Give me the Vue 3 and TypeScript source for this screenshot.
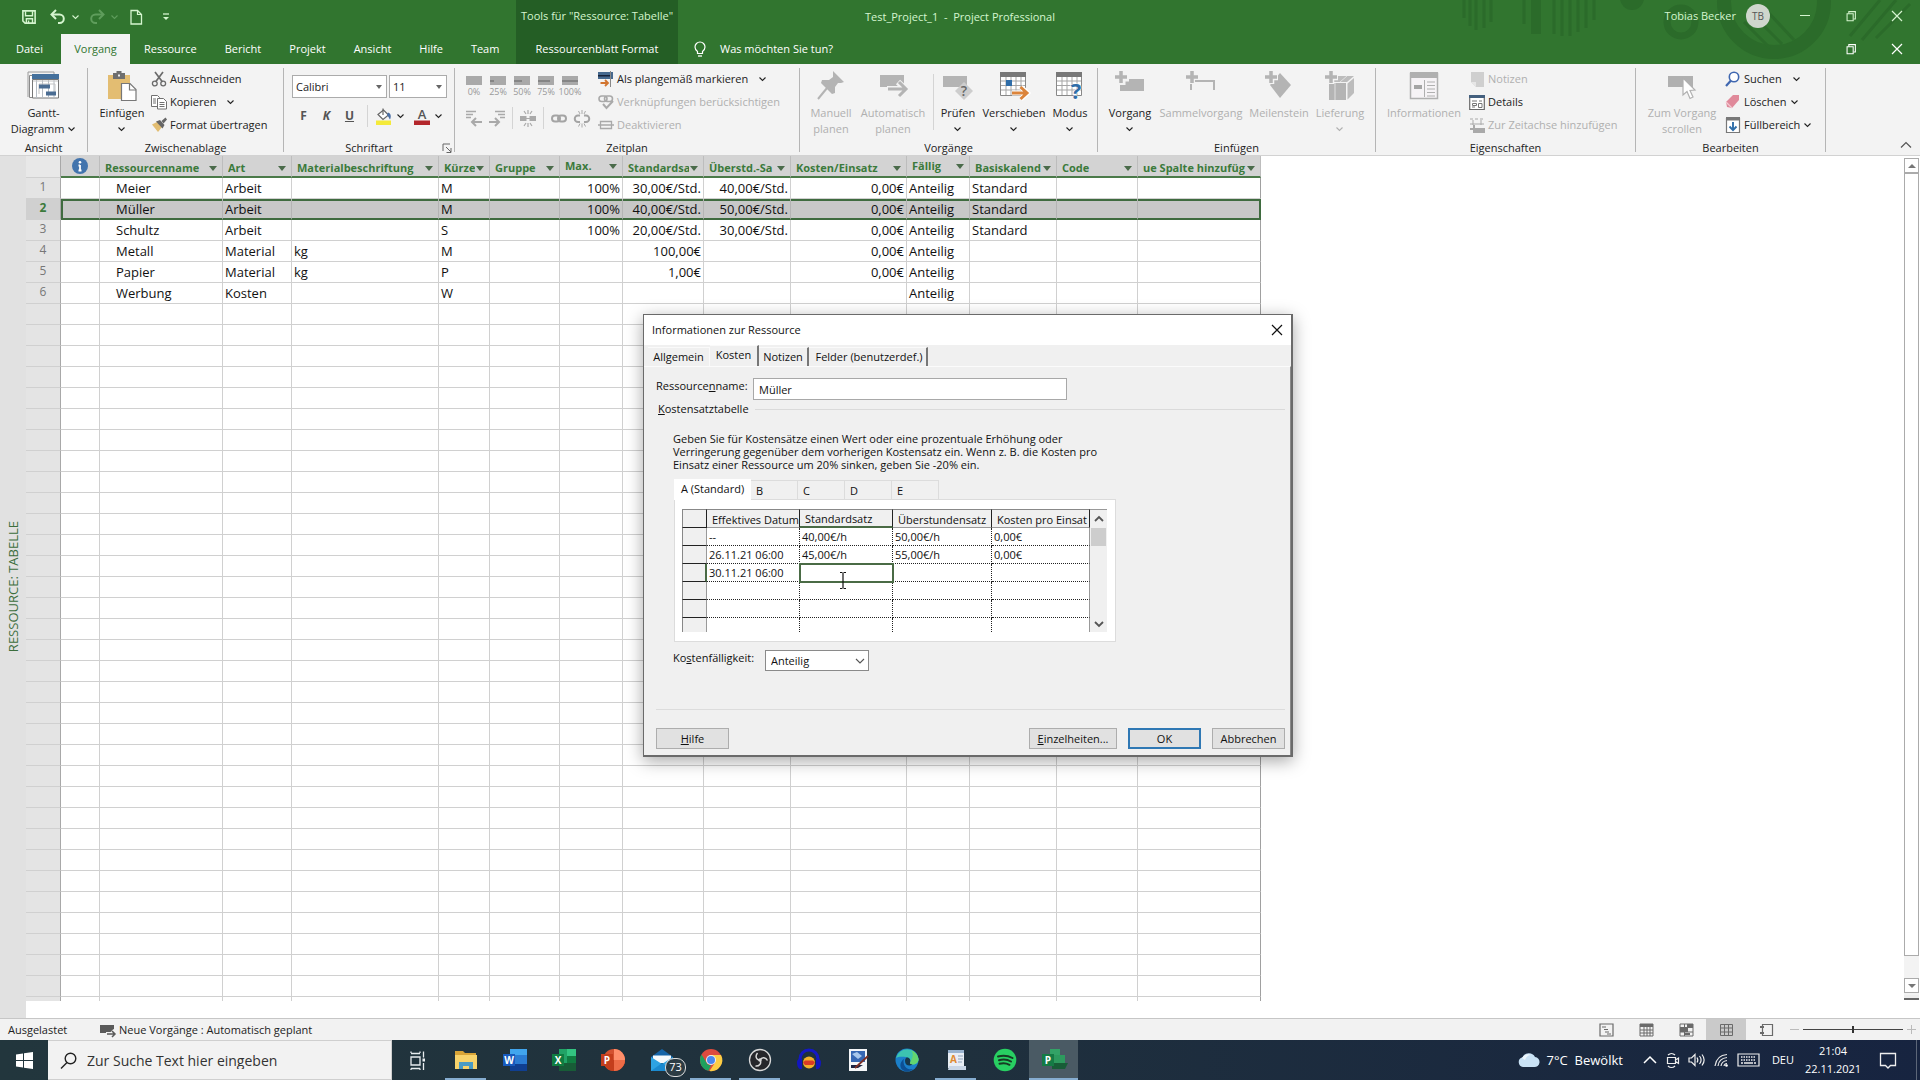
<script setup lang="ts">
import { ref } from 'vue'

type Align = 'left' | 'right'

interface Column {
  key: string
  title: string
  width: number
  align: Align
  raised?: boolean
}

interface TaskApp {
  id: string
  label: string
  running?: boolean
  active?: boolean
  badge?: string
}

const chevron = '<path d="M1.500 2.500 4.500 5.500 7.500 2.500" fill="none" stroke="currentColor" stroke-width="1.100"/>'

const icons: Record<string, string> = {
  save: '<path d="M1 1h14v14H3.500L1 12.500z" fill="none" stroke="currentColor" stroke-width="1.800"/><path d="M4 1.500v5h8v-5M5 15v-5h7v5M7.500 12v3" fill="none" stroke="currentColor" stroke-width="1.600"/>',
  undo: '<path d="M2 5.500h7.500a4.300 4.300 0 0 1 0 8.600H8" fill="none" stroke="currentColor" stroke-width="2"/><path d="M6 1 1.500 5.500 6 10" fill="none" stroke="currentColor" stroke-width="2"/>',
  redo: '<path d="M14 5.500H6.500a4.300 4.300 0 0 0 0 8.600H8" fill="none" stroke="currentColor" stroke-width="2"/><path d="M10 1l4.500 4.500L10 10" fill="none" stroke="currentColor" stroke-width="2"/>',
  page: '<path d="M3 1.500h6.500L13.500 5.500v9.500H3z" fill="none" stroke="currentColor" stroke-width="1.300"/><path d="M9.500 1.500v4h4" fill="none" stroke="currentColor" stroke-width="1.200"/>',
  customize: '<path d="M5 5h6" stroke="currentColor" stroke-width="1.300"/><path d="M5 8h6l-3 3z" fill="currentColor"/>',
  bulb: '<path d="M5.500 12.500v-2C4 9.300 3 8 3 6a5 5 0 0 1 10 0c0 2-1 3.300-2.500 4.500v2z" fill="none" stroke="currentColor" stroke-width="1.200"/><path d="M6 15h4" stroke="currentColor" stroke-width="1.300"/>',
  minimize: '<path d="M3 7.500h10" stroke="currentColor"/>',
  restore: '<path d="M3.500 5.500h7v8h-7z" fill="none" stroke="currentColor" stroke-width="1.200"/><path d="M5.500 5V3h7.500v8.500h-2" fill="none" stroke="currentColor" stroke-width="1.200"/>',
  close: '<path d="M3 3l10 10M13 3 3 13" stroke="currentColor" stroke-width="1.200"/>',
  chevron,
  gantt: '<path d="M1.500 4.500h27v22h-27z" fill="#fff" stroke="#8a8a8a"/><path d="M0 1h26v6M0 1v25" fill="none" stroke="#9a9a9a"/><path d="M4 3h27v5H4z" fill="#44709c"/><path d="M4.500 8.500h26v18.500h-26z" fill="#fff" stroke="#777"/><path d="M8.500 9v18M14.500 9v18M20.500 9v18M26 9v18" stroke="#b5bcc4"/><path d="M5 10h25M11 23V13h16v8" stroke="#c4c4c4" fill="none"/><path d="M11 13.500h11v4H11zM18 20.500h10v4H18z" fill="#4a6c92"/>',
  paste: '<path d="M1 4h22v24H1z" fill="#e3bd72"/><path d="M6 2h12v6H6z" fill="#6e6e6e"/><path d="M9.500 0h5v4h-5z" fill="#6e6e6e"/><path d="M11 3.500h2v2h-2z" fill="#eee"/><path d="M14.500 12.500h8.500L29 18.500V29.500H14.500z" fill="#fff" stroke="#777" stroke-width="1.200"/><path d="M22.500 12.500v6.500h6.500" fill="none" stroke="#777" stroke-width="1.200"/>',
  cut: '<path d="M4 1l7.500 10M12 1 4.500 11" stroke="#6b6b6b" stroke-width="1.700"/><circle cx="3.800" cy="12.500" r="2.400" fill="none" stroke="#6b6b6b" stroke-width="1.300"/><circle cx="12.200" cy="12.500" r="2.400" fill="none" stroke="#6b6b6b" stroke-width="1.300"/>',
  copy: '<path d="M.500 1.500h6l2 2v9h-8z" fill="#fff" stroke="#707070"/><path d="M6.500 4.500h6l3 3v7.500h-9z" fill="#fff" stroke="#707070"/><path d="M2 5h3M2 7h3M2 9h3M8.500 8.500h5M8.500 10.500h5M8.500 12.500h5" stroke="#707070"/>',
  brush: '<path d="M1 7.500 6 5l5 5-4 5z" fill="#e2bd72"/><path d="M5 4.500 9 3l4.500 5-2 3.500z" fill="#666"/><path d="M10.500 4 14.500.500l1.500 2-3.500 4z" fill="#666"/>',
  bucket: '<path d="M1 12.500h15V17H1z" fill="#f4ea3a"/><path d="M3 6.500 8.500 2l5 5-5.500 4.500z" fill="#fff" stroke="#666" stroke-width="1.200"/><path d="M8 7V0.500" stroke="#666" stroke-width="1.200"/><path d="M13 4.500c3 1 3.500 4 2 7-1-1.500-1.500-3-3-4.500z" fill="#4b6fa5"/>',
  fontColor: '<path d="M0 12.500h16V17H0z" fill="#b3262b"/><text x="8" y="11" text-anchor="middle" font-family="Open Sans" font-weight="600" font-size="13" fill="#555">A</text>',
  indentOut: '<path d="M0 1.500h10M0 4.500h7M0 7.500h5" stroke="#a9a9a9" stroke-width="1.300"/><path d="M16 12H7M10 8l-4 4 4 4" fill="none" stroke="#a9a9a9" stroke-width="2"/>',
  indentIn: '<path d="M6 1.500h10M9 4.500h7M11 7.500h5" stroke="#a9a9a9" stroke-width="1.300"/><path d="M0 12h9M6 8l4 4-4 4" fill="none" stroke="#a9a9a9" stroke-width="2"/>',
  split: '<path d="M0 6h6.500v5H0zM9.500 6H16v5H9.500z" fill="#a9a9a9"/><path d="M5 8.500h6" stroke="#a9a9a9"/><path d="M8 0v4M4 1l2 3M12 1l-2 3M8 17v-4M4 16l2-3M12 16l-2-3" stroke="#a9a9a9" stroke-width="1.200"/>',
  link: '<rect x="1" y="5.500" width="8" height="6" rx="3" fill="none" stroke="#a4a4a4" stroke-width="2"/><rect x="7" y="5.500" width="8" height="6" rx="3" fill="none" stroke="#a4a4a4" stroke-width="2"/>',
  unlink: '<path d="M6 5.500H4a3 3 0 0 0 0 6.500h2M10 5.500h2a3 3 0 0 1 0 6.500h-2" fill="none" stroke="#a4a4a4" stroke-width="2"/><path d="M8 0v4M4.500 1l1.500 3M11.500 1 10 4M8 17.500v-4M4.500 16.500 6 13.500M11.500 16.500 10 13.500" stroke="#a9a9a9"/>',
  onTrack: '<path d="M0 1h15v7H0z" fill="#46698e"/><path d="M0 4h12v1.500H0z" fill="#16233a"/><path d="M12.500 0v16" stroke="#888"/><path d="M2.500 12h7M7 9l3 3-3 3" fill="none" stroke="#d2752f" stroke-width="1.800"/>',
  respect: '<rect x="1" y="2" width="8" height="5.500" rx="2.700" fill="none" stroke="#a9a9a9" stroke-width="1.600"/><rect x="6.500" y="2" width="8" height="5.500" rx="2.700" fill="none" stroke="#a9a9a9" stroke-width="1.600"/><path d="M5 10l3.500 4L15 7" fill="none" stroke="#a9a9a9" stroke-width="2"/>',
  inactivate: '<path d="M2.500 4.500h11v7h-11zM0 8h16" fill="none" stroke="#a9a9a9" stroke-width="1.300"/>',
  pin: '<path d="M16 0 27 11l-3 1-3 0-3 4 0 6-3 1L4 12l1-3 7 0 4-3z" fill="#b4b4b4"/><path d="M10 17 1 28" stroke="#b4b4b4" stroke-width="2"/>',
  auto: '<path d="M1 4h24v12H1z" fill="#b4b4b4"/><path d="M8 18h17M19 11l7.500 7L19 25" fill="none" stroke="#f3f3f3" stroke-width="6"/><path d="M9 18h17M20 11l7 7-7 7" fill="none" stroke="#b4b4b4" stroke-width="3"/>',
  inspect: '<path d="M0 5h24v11H0z" fill="#b4b4b4"/><path d="M21 11l9 9-9 9-9-9z" fill="#cdcdcd"/><text x="21" y="25" text-anchor="middle" font-family="Open Sans" font-weight="600" font-size="14" fill="#666">?</text>',
  move: '<path d="M1.500 2.500h25v22h-25z" fill="#fff" stroke="#888"/><path d="M1 1h26v5H1z" fill="#787878"/><path d="M7 6v18M12 6v18M17 6v18M22 6v18M2 10h24M2 14.500h24M2 19h24" stroke="#a5a5a5"/><path d="M7 9h6v6H7z" fill="#2f6da8"/><path d="M13 22h15M22 16l6.500 6-6.500 6" fill="none" stroke="#fff" stroke-width="5"/><path d="M13 22h14M21.500 16l6.500 6-6.500 6" fill="none" stroke="#db843b" stroke-width="3"/>',
  mode: '<path d="M1.500 2.500h25v22h-25z" fill="#fff" stroke="#888"/><path d="M1 1h26v5H1z" fill="#787878"/><path d="M7 6v18M12 6v18M17 6v18M22 6v18M2 10h24M2 14.500h24M2 19h24" stroke="#a5a5a5"/><text x="21" y="28" text-anchor="middle" font-family="Open Sans" font-weight="700" font-size="22" fill="#2f6da8" stroke="#fff" stroke-width="1" paint-order="stroke">?</text>',
  addTask: '<path d="M5 8h24v12H5z" fill="#b4b4b4"/><path d="M7 0v14M0 7h14" stroke="#f3f3f3" stroke-width="7"/><path d="M6 0v12M0 6h12" stroke="#b4b4b4" stroke-width="3.500"/>',
  addSummary: '<path d="M5 19v-9h23v9" fill="none" stroke="#b4b4b4" stroke-width="2"/><path d="M6 0v13M0 6h13" stroke="#f3f3f3" stroke-width="6"/><path d="M6 0v12M0 6h12" stroke="#b4b4b4" stroke-width="3.500"/>',
  addMilestone: '<path d="M15 2l11 12-11 13L5 14z" fill="#b4b4b4"/><path d="M6 0v13M0 6h13" stroke="#f3f3f3" stroke-width="6.500"/><path d="M6 0v12M0 6h12" stroke="#b4b4b4" stroke-width="3.500"/>',
  addDelivery: '<path d="M4 12h17v17H4z" fill="#b4b4b4"/><path d="M5 11l7-6h17l-7 6zM22.500 12.500 29 7v15l-6.500 6.500z" fill="#bcbcbc"/><path d="M15 11l7-6M10 12v17" stroke="#e0e0e0"/><path d="M6 0v13M0 6h13" stroke="#f3f3f3" stroke-width="6.500"/><path d="M6 0v12M0 6h12" stroke="#b4b4b4" stroke-width="3.500"/>',
  info: '<path d="M1.500 2.500h27v25h-27z" fill="#f6f3f6" stroke="#b0b0b0" stroke-width="1.500"/><path d="M1 1h28v6H1z" fill="#b0b0b0"/><path d="M5 14h8v4H5z" fill="#a5a5a5"/><path d="M15.500 9v17" stroke="#b0b0b0"/><path d="M18 11h8M18 14.500h8M18 18h8M18 21.500h8M18 25h8" stroke="#b0b0b0"/>',
  note: '<path d="M2 1h13v15H7l-5-5z" fill="#cfcfcf"/><path d="M2 11h5v5z" fill="#e6e6e6"/>',
  details: '<path d="M.700 1.500h14.600v14H.700z" fill="#fff" stroke="#6a6a6a" stroke-width="1.200"/><path d="M0 1h16v3H0z" fill="#44607e"/><path d="M3 7h5M10 7h3M3 13h3" stroke="#777"/><path d="M3.500 9.500h4v2h-4zM9.500 9.500h3.500v4H9.500z" fill="none" stroke="#777"/>',
  timeline: '<path d="M1 2h3M6 2h3M11 2h3M1 7h14" stroke="#a9a9a9" stroke-width="1.200"/><path d="M4 3v5M12 3v5" stroke="#a9a9a9"/><path d="M6 11h10v5H6z" fill="#a9a9a9"/><path d="M5 8v8M1 12h8" stroke="#a9a9a9" stroke-width="2"/>',
  scrollTo: '<path d="M1 5h25v11H1z" fill="#b0b0b0"/><path d="M16 7v17l4-3.500 3 7 3-1.500-3-6.500 5-.500z" fill="#fff" stroke="#b0b0b0" stroke-width="1.200"/>',
  search: '<circle cx="9" cy="6" r="4.700" fill="#fff" stroke="#3f67b0" stroke-width="1.600"/><path d="M6 9.500 1 15" stroke="#3f67b0" stroke-width="2.200"/>',
  erase: '<path d="M8 1l6 0 0 5-7 8-5-1-1-5z" fill="#e0899a"/><path d="M1 8l6 6" stroke="#f4c9d1" stroke-width="1.200"/>',
  fill: '<path d="M1.500 1.500h13v14h-13z" fill="#fff" stroke="#787878" stroke-width="1.200"/><path d="M1 0h14v3.500H1z" fill="#787878"/><path d="M8 5v8M4.500 9.500 8 13.200l3.500-3.700" fill="none" stroke="#2f6da8" stroke-width="1.900"/>',
  launcher: '<path d="M1 8V1h7M4 4l5 5M9 5v4.500H4.500" fill="none" stroke="#666"/>',
  autoPlan: '<path d="M0 3h14v8H0z" fill="#5a5a5a"/><path d="M6 12h9M12 8.500l3.500 3.500-3.500 3.500" fill="none" stroke="#f2f2f2" stroke-width="4"/><path d="M7 12h8M12 9l3 3-3 3" fill="none" stroke="#5a5a5a" stroke-width="1.500"/>',
  viewGantt: '<path d="M1 2h13v12H1z" fill="none" stroke="#6a6a6a" stroke-width="1.200"/><path d="M3 5h4M5 7.500h4M6 10h4M8 12h4" stroke="#6a6a6a"/>',
  viewUsage: '<path d="M1 2h13v12H1zM5 2v12M8 5v9M11 5v9M1 8h13M1 11h13" fill="none" stroke="#6a6a6a"/><path d="M1 2h13v3H1z" fill="#6a6a6a"/>',
  viewTeam: '<path d="M1 2h13v12H1zM5.500 2v12M1 10h13" fill="none" stroke="#6a6a6a"/><path d="M1 5h8v5H1zM8 2h6v4H8zM6 11h5v2H6z" fill="#6a6a6a"/>',
  viewSheet: '<path d="M1.500 2.500h12v11h-12zM5.500 2v12M9.500 2v12M1 6h13M1 10h13" fill="none" stroke="#6a6a6a"/>',
  viewReport: '<path d="M3.500 2.500h10v11h-10z" fill="none" stroke="#6a6a6a" stroke-width="1.200"/><path d="M1 5h4M1 11h4" stroke="#6a6a6a" stroke-width="2"/>',
  windows: '<path d="M0 2.500 7 1.500V8H0zM8 1.300 17 0v8H8zM0 9h7v6.500L0 14.500zM8 9h9v8L8 15.700z" fill="#fff"/>',
  lens: '<circle cx="10.500" cy="6.500" r="5.300" fill="none" stroke="#222" stroke-width="1.400"/><path d="M7 10.500 1 16.500" stroke="#222" stroke-width="1.500"/>',
  taskView: '<path d="M6 9h9v8H6zM6 5V3.500M15 5V3.500M6 5.500h9M6 20.500h9M6 20.500V22M15 20.500V22M18.500 3.500v6M18.500 15v7" fill="none" stroke="#e8edf0" stroke-width="1.300"/><path d="M17.500 10.500h2.500v3h-2.500z" fill="#e8edf0"/>',
  explorer: '<path d="M1 3h8l2 2h11v4H1z" fill="#d9a437"/><path d="M1 7h22v14H1z" fill="#f8d36b"/><path d="M5 14h14v7h-4v-3H9v3H5z" fill="#4a9bc4"/>',
  word: '<path d="M7 1h17v22H7z" fill="#2b7cd3"/><path d="M7 1h17v6H7z" fill="#41a5ee"/><path d="M7 16h17v7H7z" fill="#103f91"/><path d="M0 6h12v12H0z" fill="#185abd"/><text x="6" y="16" text-anchor="middle" font-family="Open Sans" font-weight="700" font-size="10" fill="#fff">W</text>',
  excel: '<path d="M7 1h17v22H7z" fill="#21a366"/><path d="M15 1h9v7h-9z" fill="#33c481"/><path d="M7 15h17v8H7z" fill="#185c37"/><path d="M15 8h9v7h-9z" fill="#107c41"/><path d="M0 6h12v12H0z" fill="#107c41"/><text x="6" y="16" text-anchor="middle" font-family="Open Sans" font-weight="700" font-size="10" fill="#fff">X</text>',
  powerpoint: '<circle cx="13" cy="12" r="11" fill="#d35230"/><path d="M13 1a11 11 0 0 1 11 11H13z" fill="#ff8f6b"/><path d="M2 12h22a11 11 0 0 1-22 0z" fill="#c43e1c"/><path d="M13 12h11a11 11 0 0 1-11 11z" fill="#ed6c47"/><path d="M0 6h12v12H0z" fill="#c43e1c"/><text x="6" y="16" text-anchor="middle" font-family="Open Sans" font-weight="700" font-size="10" fill="#fff">P</text>',
  mail: '<path d="M1 9 12 1l11 8v3H1z" fill="#1564a8"/><path d="M3 7.500h18V15H3z" fill="#f5f9fc"/><path d="M1 9l11 7 11-7v14H1z" fill="#2ea3e3"/><path d="M1 23 12 15l11 8z" fill="#1b8ad0"/>',
  chrome: '<circle cx="12" cy="12" r="11" fill="#dd4b3e"/><path d="M2.500 6.500 9 17l-1 5.300A11 11 0 0 1 2.500 6.500z" fill="#1fa15d"/><path d="M4 16l8 1-2.500 5.800A11 11 0 0 1 2.500 17z" fill="#1fa15d"/><path d="M12 7h10a11 11 0 0 1-11.500 16L16.500 14z" fill="#fccd44"/><circle cx="12" cy="12" r="5" fill="#f1f1f1"/><circle cx="12" cy="12" r="4" fill="#4a88ee"/>',
  obs: '<circle cx="12" cy="12" r="10.500" fill="#26262a" stroke="#d8d8d8" stroke-width="1.300"/><path d="M12 12c-4 0-5-4-2.500-7M12 12c2-3.500 6-2.500 7.500.500M12 12c2 3.500-1 6.500-4.500 6" fill="none" stroke="#d8d8d8" stroke-width="1.500"/><circle cx="12" cy="12" r="1.800" fill="#d8d8d8"/>',
  audacity: '<path d="M3 15V11a9 9 0 0 1 18 0v4" fill="none" stroke="#1519c4" stroke-width="3"/><path d="M0 14c0-3 3-4 5-3v10c-3 1-5-2-5-7zM24 14c0-3-3-4-5-3v10c3 1 5-2 5-7z" fill="#1216c0"/><circle cx="12" cy="14.500" r="6" fill="#f3b02a"/><path d="M6 14.500l2-2h8l2 2-2 2.500H8z" fill="#d93a25"/>',
  paint: '<path d="M3 1h18v22H3z" fill="#f4f6f8"/><path d="M5 3h14v11H5z" fill="#3768b4"/><path d="M6 6l5-2 5 4-4 3z" fill="#a9c8ec"/><path d="M5 17h12l-5 3H5z" fill="#1b2342"/><path d="M22 8 9 20" stroke="#7c2f26" stroke-width="1.800"/>',
  edge: '<circle cx="12" cy="12" r="11.500" fill="#1b7fc9"/><path d="M1 10A11.500 11.500 0 0 1 23.500 11c0 4-3 5.500-6 5.500-2 0-3-1-2.500-2 1-3-1-5-4-5.500C7 8.500 3 8.500 1 10z" fill="#3cc4b0"/><path d="M16 2a11.500 11.500 0 0 1 7.500 9c0 4-3 5.500-6 5.500-2 0-3-1-2.500-2 3-5 4-9 1-12.500z" fill="#63d56f"/><path d="M8.500 13c0 6 4 9.500 10 8a11.500 11.500 0 0 1-9 2C4 21 4 14 9.500 10.500c-.700.800-1 1.500-1 2.500z" fill="#0d4f94"/><path d="M11.500 9.500c3 0 4.500 2 3.500 5-.500 1 .500 2 2.500 2-3 2-7.500 1-7.500-3.500 0-1.500.500-2.500 1.500-3.500z" fill="#17384b"/>',
  wordpad: '<path d="M4 2h16v3H4z" fill="#9ab3cf"/><path d="M4 5h16v15H4z" fill="#e9eef5"/><path d="M5 18h17v4H4z" fill="#c9d6e6"/><text x="9.500" y="15" text-anchor="middle" font-family="Open Sans" font-weight="700" font-size="10" fill="#e08a32">A</text><path d="M14 8h5M14 11h5M14 14h4" stroke="#8fa3bb"/>',
  spotify: '<circle cx="12" cy="12" r="11.300" fill="#28cf62"/><path d="M5 8.500c5-1.500 10-1 14.500 1.500M6 12.300c4-1.200 8.500-.800 12 1.200M6.500 15.800c3.500-1 7-.600 10 1" fill="none" stroke="#173a24" stroke-width="2" stroke-linecap="round"/>',
  project: '<path d="M8 1h10v7H8z" fill="#33a266"/><path d="M10 7h13v9H10z" fill="#2d9a5e"/><path d="M10 15h16l-3 6H10z" fill="#185c37"/><path d="M0 6h12v12H0z" fill="#157a45"/><text x="6" y="16" text-anchor="middle" font-family="Open Sans" font-weight="700" font-size="10" fill="#fff">P</text>',
  cloud: '<path d="M6 15a5 5 0 0 1-.500-9.800A7 7 0 0 1 18 5a5 5 0 0 1-1 10z" fill="#c9e2f5"/><path d="M5 6a7 7 0 0 1 9-3c-3 0-5 2-6 5z" fill="#eef7fd"/>',
  trayUp: '<path d="M2 11l6-6 6 6" fill="none" stroke="#fff" stroke-width="1.500"/>',
  meet: '<path d="M3.500 5.500h8v6h-8zM11.500 8l3-2v5.500l-3-2M4 3c2-2 5-2 7 0M4 14c2 2 5 2 7 0" fill="none" stroke="#eee" stroke-width="1.200"/>',
  speaker: '<path d="M1 6h2.500L7 2.500v11L3.500 10H1z" fill="none" stroke="#eee" stroke-width="1.200"/><path d="M9 5.500c1 1.500 1 3.500 0 5M11.500 4c2 2.500 2 5.500 0 8M14 2.500c2.700 3.500 2.700 7.500 0 11" fill="none" stroke="#eee" stroke-width="1.200"/>',
  wifi: '<path d="M2 14C3 7 7 3 14 2.500M5 14c.600-5 4-8 9-8.500M8 14c.400-3 2.500-5 6-5.500M11 14c.300-1.500 1.500-2.500 3-2.500" fill="none" stroke="#e8e8e8" stroke-width="1.200"/><circle cx="13.500" cy="13.500" r="1.300" fill="#fff"/>',
  keyboard: '<path d="M1 2h21v12H1z" fill="none" stroke="#eee" stroke-width="1.200"/><path d="M4 5h15M4 8h15" stroke="#eee" stroke-width="1.300" stroke-dasharray="1.500 1"/><path d="M4 11h2M7 11h9M17 11h2" stroke="#eee" stroke-width="1.300"/>',
  notify: '<path d="M1.500 1.500h15v12h-5l-2.500 2.500L6.500 13.500h-5z" fill="none" stroke="#eee" stroke-width="1.300"/>',
  thinUp: '<path d="M1 7.500 6 2.500l5 5" fill="none" stroke="#555" stroke-width="1.200"/>'
}

const mainTabs = ['Ressource', 'Bericht', 'Projekt', 'Ansicht', 'Hilfe', 'Team']
const percents = ['0%', '25%', '50%', '75%', '100%']

const columns: Column[] = [
  { key: 'name', title: 'Ressourcenname', width: 123, align: 'left' },
  { key: 'type', title: 'Art', width: 69, align: 'left' },
  { key: 'label', title: 'Materialbeschriftung', width: 147, align: 'left' },
  { key: 'short', title: 'Kürze', width: 51, align: 'left' },
  { key: 'team', title: 'Gruppe', width: 70, align: 'left' },
  { key: 'max', title: 'Max.', width: 63, align: 'right', raised: true },
  { key: 'rate', title: 'Standardsa', width: 81, align: 'right' },
  { key: 'over', title: 'Überstd.-Sa', width: 87, align: 'right' },
  { key: 'use', title: 'Kosten/Einsatz', width: 116, align: 'right' },
  { key: 'due', title: 'Fällig', width: 63, align: 'left', raised: true },
  { key: 'cal', title: 'Basiskalend', width: 87, align: 'left' },
  { key: 'code', title: 'Code', width: 81, align: 'left' },
  { key: 'add', title: 'ue Spalte hinzufüg', width: 123, align: 'left' }
]

const resources: Record<string, string>[] = [
  { name: 'Meier', type: 'Arbeit', short: 'M', max: '100%', rate: '30,00€/Std.', over: '40,00€/Std.', use: '0,00€', due: 'Anteilig', cal: 'Standard' },
  { name: 'Müller', type: 'Arbeit', short: 'M', max: '100%', rate: '40,00€/Std.', over: '50,00€/Std.', use: '0,00€', due: 'Anteilig', cal: 'Standard' },
  { name: 'Schultz', type: 'Arbeit', short: 'S', max: '100%', rate: '20,00€/Std.', over: '30,00€/Std.', use: '0,00€', due: 'Anteilig', cal: 'Standard' },
  { name: 'Metall', type: 'Material', label: 'kg', short: 'M', rate: '100,00€', use: '0,00€', due: 'Anteilig' },
  { name: 'Papier', type: 'Material', label: 'kg', short: 'P', rate: '1,00€', use: '0,00€', due: 'Anteilig' },
  { name: 'Werbung', type: 'Kosten', short: 'W', due: 'Anteilig' }
]
const blankRows = 34
const rows = [...resources, ...Array.from({ length: blankRows }, () => ({}) as Record<string, string>)]
const selectedRow = 1

const rateTabs = ['B', 'C', 'D', 'E']
const rateColumns = ['Effektives Datum', 'Standardsatz', 'Überstundensatz', 'Kosten pro Einsat']
const rates = [
  ['--', '40,00€/h', '50,00€/h', '0,00€'],
  ['26.11.21 06:00', '45,00€/h', '55,00€/h', '0,00€'],
  ['30.11.21 06:00', '', '', ''],
  ['', '', '', ''],
  ['', '', '', ''],
  ['', '', '', '']
]

const views = ['viewGantt', 'viewUsage', 'viewTeam', 'viewSheet', 'viewReport']

const apps: TaskApp[] = [
  { id: 'taskView', label: 'Aktive Anwendungen' },
  { id: 'explorer', label: 'Explorer', running: true },
  { id: 'word', label: 'Word' },
  { id: 'excel', label: 'Excel' },
  { id: 'powerpoint', label: 'PowerPoint' },
  { id: 'mail', label: 'Mail', badge: '73' },
  { id: 'chrome', label: 'Chrome', running: true },
  { id: 'obs', label: 'OBS', running: true },
  { id: 'audacity', label: 'Audacity' },
  { id: 'paint', label: 'Bildbearbeitung' },
  { id: 'edge', label: 'Edge' },
  { id: 'wordpad', label: 'WordPad', running: true },
  { id: 'spotify', label: 'Spotify' },
  { id: 'project', label: 'Project', running: true, active: true }
]

const fontName = ref('Calibri')
const fontSize = ref('11')
const resourceName = ref('Müller')
const accrual = ref('Anteilig')
const zoomLevel = ref(50)
</script>

<template>
  <div class="app">
    <header class="titlebar">
      <svg class="ornament" viewBox="0 0 460 64" aria-hidden="true">
        <g fill="none" stroke="#2b6b2a">
          <path d="M4 0v18M10 0v26M16 0v30M24 0v28M31 0v22M64 0v24M94 0v34M102 0v36M110 0v36M118 0v32M126 0v28M134 0v20" stroke-width="3" />
          <path d="M76 0v34" stroke-width="10" />
          <circle cx="172" cy="-2" r="12" fill="#2b6b2a" stroke="none" />
          <circle cx="221" cy="22" r="14" stroke-width="7" />
          <circle cx="314" cy="2" r="50" stroke-width="14" />
          <path d="M284 22l26 26M296 18l26 26M308 12l26 28M420 0l-30 36M436 0l-34 40M450 4l-34 34" stroke-width="3" />
        </g>
      </svg>
      <div class="title-row">
        <div class="title-left">
          <div class="quick">
            <button class="q1" aria-label="Speichern"><svg width="14" height="14" viewBox="0 0 16 16" v-html="icons.save" /></button>
            <button class="q2" aria-label="Rückgängig"><svg width="16" height="16" viewBox="0 0 16 16" v-html="icons.undo" /><svg width="9" height="8" v-html="icons.chevron" /></button>
            <button class="q2 faded" aria-label="Wiederholen"><svg width="16" height="16" viewBox="0 0 16 16" v-html="icons.redo" /><svg width="9" height="8" v-html="icons.chevron" /></button>
            <button class="q3" aria-label="Neu"><svg width="16" height="16" viewBox="0 0 16 16" v-html="icons.page" /></button>
            <button class="q3" aria-label="Symbolleiste anpassen"><svg width="16" height="16" viewBox="0 0 16 16" v-html="icons.customize" /></button>
          </div>
          <div class="context-label">Tools für "Ressource: Tabelle"</div>
        </div>
        <div class="doc-title">Test_Project_1&nbsp; -&nbsp; Project Professional</div>
        <div class="title-right">
          <span>Tobias Becker</span>
          <span class="avatar">TB</span>
          <button aria-label="Minimieren"><svg width="16" height="16" v-html="icons.minimize" /></button>
          <button aria-label="Verkleinern"><svg width="14" height="14" viewBox="0 0 16 16" v-html="icons.restore" /></button>
          <button aria-label="Schließen"><svg width="16" height="16" v-html="icons.close" /></button>
        </div>
      </div>
      <nav class="tab-row">
        <div class="main-tabs">
          <button class="file-tab">Datei</button>
          <button class="tab current">Vorgang</button>
          <button v-for="t in mainTabs" :key="t" class="tab">{{ t }}</button>
        </div>
        <button class="context-tab">Ressourcenblatt Format</button>
        <button class="tell-me"><svg width="16" height="18" viewBox="0 0 16 16" v-html="icons.bulb" />Was möchten Sie tun?</button>
        <div class="doc-buttons">
          <button aria-label="Fenster verkleinern"><svg width="14" height="14" viewBox="0 0 16 16" v-html="icons.restore" /></button>
          <button aria-label="Fenster schließen"><svg width="16" height="16" v-html="icons.close" /></button>
        </div>
      </nav>
    </header>

    <section class="ribbon">
      <div class="group g-view">
        <div class="tools">
          <button class="big w-view"><svg width="32" height="30" v-html="icons.gantt" /><span>Gantt-<br />Diagramm <svg width="9" height="8" v-html="icons.chevron" /></span></button>
        </div>
        <div class="caption">Ansicht</div>
      </div>

      <div class="group g-clip">
        <div class="tools">
          <button class="big w-clip"><svg width="30" height="30" v-html="icons.paste" /><span>Einfügen<br /><svg width="9" height="8" v-html="icons.chevron" /></span></button>
          <div class="stack">
            <button class="small"><svg width="16" height="16" v-html="icons.cut" />Ausschneiden</button>
            <button class="small"><svg width="16" height="16" v-html="icons.copy" />Kopieren<svg class="chev" width="9" height="8" v-html="icons.chevron" /></button>
            <button class="small"><svg width="16" height="16" v-html="icons.brush" />Format übertragen</button>
          </div>
        </div>
        <div class="caption">Zwischenablage</div>
      </div>

      <div class="group g-font">
        <div class="tools font-tools">
          <div class="font-row">
            <span class="combo font-name"><select v-model="fontName" aria-label="Schriftart"><option>Calibri</option></select></span>
            <span class="combo font-size"><select v-model="fontSize" aria-label="Schriftgrad"><option>11</option></select></span>
          </div>
          <div class="font-row styles">
            <button class="glyph"><b>F</b></button>
            <button class="glyph"><b><i>K</i></b></button>
            <button class="glyph"><b><u>U</u></b></button>
            <i class="rule" />
            <button class="colour" aria-label="Hintergrundfarbe"><svg width="17" height="17" v-html="icons.bucket" /><svg width="9" height="8" v-html="icons.chevron" /></button>
            <button class="colour" aria-label="Schriftfarbe"><svg width="16" height="17" v-html="icons.fontColor" /><svg width="9" height="8" v-html="icons.chevron" /></button>
          </div>
        </div>
        <div class="caption">Schriftart<svg class="launcher" width="10" height="10" v-html="icons.launcher" /></div>
      </div>

      <div class="group g-plan">
        <div class="tools">
          <div class="plan-left">
            <div class="percents">
              <button v-for="(p, i) in percents" :key="p" class="percent">
                <svg width="16" height="9"><path d="M0 0h16v9H0z" fill="#a9a9a9" /><path d="M0 4h16v2H0z" fill="#858585" :style="{ clipPath: `inset(0 ${100 - i * 25}% 0 0)` }" /></svg>
                {{ p }}
              </button>
            </div>
            <div class="links">
              <button aria-label="Ausrücken"><svg width="16" height="17" v-html="icons.indentOut" /></button>
              <button aria-label="Einrücken"><svg width="16" height="17" v-html="icons.indentIn" /></button>
              <i class="rule" />
              <button aria-label="Unterbrechen"><svg width="16" height="17" v-html="icons.split" /></button>
              <i class="rule" />
              <button aria-label="Verknüpfen"><svg width="16" height="17" v-html="icons.link" /></button>
              <button aria-label="Verknüpfung aufheben"><svg width="16" height="17" v-html="icons.unlink" /></button>
            </div>
          </div>
          <div class="stack">
            <button class="small"><svg width="16" height="16" v-html="icons.onTrack" />Als plangemäß markieren<svg class="chev" width="9" height="8" v-html="icons.chevron" /></button>
            <button class="small off"><svg width="16" height="16" v-html="icons.respect" />Verknüpfungen berücksichtigen</button>
            <button class="small off"><svg width="16" height="16" v-html="icons.inactivate" />Deaktivieren</button>
          </div>
        </div>
        <div class="caption">Zeitplan</div>
      </div>

      <div class="group g-tasks">
        <div class="tools">
          <button class="big off w-manual"><svg width="28" height="30" v-html="icons.pin" /><span>Manuell<br />planen</span></button>
          <button class="big off w-auto"><svg width="28" height="30" v-html="icons.auto" /><span>Automatisch<br />planen</span></button>
          <i class="rule tall" />
          <button class="big w-inspect"><svg width="30" height="30" v-html="icons.inspect" /><span>Prüfen<br /><svg width="9" height="8" v-html="icons.chevron" /></span></button>
          <button class="big w-move"><svg width="30" height="30" v-html="icons.move" /><span>Verschieben<br /><svg width="9" height="8" v-html="icons.chevron" /></span></button>
          <button class="big w-mode"><svg width="30" height="30" v-html="icons.mode" /><span>Modus<br /><svg width="9" height="8" v-html="icons.chevron" /></span></button>
        </div>
        <div class="caption">Vorgänge</div>
      </div>

      <div class="group g-insert">
        <div class="tools">
          <button class="big w-task"><svg width="30" height="30" v-html="icons.addTask" /><span>Vorgang<br /><svg width="9" height="8" v-html="icons.chevron" /></span></button>
          <button class="big off w-summary"><svg width="30" height="30" v-html="icons.addSummary" /><span>Sammelvorgang</span></button>
          <button class="big off w-mile"><svg width="28" height="30" v-html="icons.addMilestone" /><span>Meilenstein</span></button>
          <button class="big off w-deliver"><svg width="30" height="30" v-html="icons.addDelivery" /><span>Lieferung<br /><svg width="9" height="8" v-html="icons.chevron" /></span></button>
        </div>
        <div class="caption">Einfügen</div>
      </div>

      <div class="group g-props">
        <div class="tools">
          <button class="big off w-info"><svg width="30" height="30" v-html="icons.info" /><span>Informationen</span></button>
          <div class="stack">
            <button class="small off"><svg width="16" height="16" v-html="icons.note" />Notizen</button>
            <button class="small"><svg width="16" height="16" v-html="icons.details" />Details</button>
            <button class="small off"><svg width="16" height="16" v-html="icons.timeline" />Zur Zeitachse hinzufügen</button>
          </div>
        </div>
        <div class="caption">Eigenschaften</div>
      </div>

      <div class="group g-edit">
        <div class="tools">
          <button class="big off w-scroll"><svg width="30" height="30" v-html="icons.scrollTo" /><span>Zum Vorgang<br />scrollen</span></button>
          <div class="stack">
            <button class="small"><svg width="16" height="16" v-html="icons.search" />Suchen<svg class="chev" width="9" height="8" v-html="icons.chevron" /></button>
            <button class="small"><svg width="16" height="16" v-html="icons.erase" />Löschen<svg width="9" height="8" v-html="icons.chevron" /></button>
            <button class="small"><svg width="16" height="16" v-html="icons.fill" />Füllbereich<svg width="9" height="8" v-html="icons.chevron" /></button>
          </div>
        </div>
        <div class="caption">Bearbeiten</div>
      </div>
      <button class="collapse" aria-label="Menüband reduzieren"><svg width="12" height="10" v-html="icons.thinUp" /></button>
    </section>

    <main class="workspace">
      <div class="view-name"><span>RESSOURCE: TABELLE</span></div>
      <div class="sheet">
        <table class="grid">
          <colgroup>
            <col style="width: 35px" />
            <col style="width: 39px" />
            <col v-for="c in columns" :key="c.key" :style="{ width: c.width + 'px' }" />
          </colgroup>
          <thead>
            <tr>
              <th class="corner" />
              <th class="info"><svg width="16" height="16"><circle cx="8" cy="8" r="8" fill="#4274ad" /><path d="M8 7v5.500M6.500 7.500H8M6.500 12.500h3" stroke="#fff" stroke-width="1.800" /><circle cx="8" cy="4.300" r="1.300" fill="#fff" /></svg></th>
              <th v-for="c in columns" :key="c.key" :class="{ raised: c.raised }">
                <div class="head"><span class="head-text">{{ c.title }}</span><i class="drop" /></div>
              </th>
            </tr>
          </thead>
          <tbody>
            <tr v-for="(r, i) in rows" :key="i" :class="{ selected: i === selectedRow }">
              <th class="number">{{ i < resources.length ? i + 1 : '' }}</th>
              <td />
              <td v-for="c in columns" :key="c.key" :class="[c.align, 'col-' + c.key]">{{ r[c.key] }}</td>
            </tr>
          </tbody>
        </table>
      </div>
      <div class="scroll">
        <button aria-label="Nach oben"><i class="up" /></button>
        <div class="thumb" />
        <div class="gap" />
        <button aria-label="Nach unten"><i class="down" /></button>
        <div class="grip" />
      </div>

      <section class="dialog" role="dialog" aria-labelledby="dlg-title">
        <header class="dlg-head">
          <span id="dlg-title">Informationen zur Ressource</span>
          <button aria-label="Schließen"><svg width="16" height="16" v-html="icons.close" /></button>
        </header>
        <div class="dlg-tabs">
          <button class="t1">Allgemein</button>
          <button class="t2 active">Kosten</button>
          <button class="t3">Notizen</button>
          <button class="t4">Felder (benutzerdef.)</button>
        </div>
        <div class="dlg-body">
          <div class="name-row">
            <label for="res-name">Ressource<u>n</u>name:</label>
            <input id="res-name" v-model="resourceName" type="text" />
          </div>
          <div class="legend"><span><u>K</u>ostensatztabelle</span><i /></div>
          <p class="hint">Geben Sie für Kostensätze einen Wert oder eine prozentuale Erhöhung oder<br />Verringerung gegenüber dem vorherigen Kostensatz ein. Wenn z. B. die Kosten pro<br />Einsatz einer Ressource um 20% sinken, geben Sie -20% ein.</p>
          <div class="rate-tabs">
            <button class="active">A (Standard)</button>
            <button v-for="t in rateTabs" :key="t">{{ t }}</button>
          </div>
          <div class="rate-panel">
            <div class="rate-view">
              <table class="rates">
                <colgroup>
                  <col style="width: 25px" />
                  <col style="width: 93px" />
                  <col style="width: 93px" />
                  <col style="width: 99px" />
                  <col style="width: 98px" />
                </colgroup>
                <thead>
                  <tr>
                    <th />
                    <th v-for="(c, i) in rateColumns" :key="c" :class="{ hot: i === 1 }">{{ c }}</th>
                  </tr>
                </thead>
                <tbody>
                  <tr v-for="(r, i) in rates" :key="i">
                    <th :class="{ hot: i === 2 }" />
                    <td v-for="(v, j) in r" :key="j" :class="{ focus: i === 2 && j === 1 }">{{ v }}</td>
                  </tr>
                </tbody>
              </table>
              <div class="rate-scroll">
                <svg width="10" height="8" viewBox="0 0 10 8"><path d="M1 6l4-4 4 4" fill="none" stroke="#555" stroke-width="1.800" /></svg>
                <i />
                <svg class="bottom" width="10" height="8" viewBox="0 0 10 8"><path d="M1 2l4 4 4-4" fill="none" stroke="#555" stroke-width="1.800" /></svg>
              </div>
            </div>
          </div>
          <div class="accrual-row">
            <label for="accrual">Ko<u>s</u>tenfälligkeit:</label>
            <span class="pick">
              <select id="accrual" v-model="accrual"><option>Anteilig</option></select>
              <svg width="10" height="8" viewBox="0 0 10 8"><path d="M1 2l4 4 4-4" fill="none" stroke="#555" stroke-width="1.100" /></svg>
            </span>
          </div>
          <footer class="dlg-foot">
            <button><u>H</u>ilfe</button>
            <span class="push" />
            <button class="wide"><u>E</u>inzelheiten...</button>
            <button class="primary">OK</button>
            <button>Abbrechen</button>
          </footer>
        </div>
        <svg class="beam" width="8" height="17" viewBox="0 0 8 17"><path d="M1 .500h2.500M4.500 .500H7M1 16.500h2.500M4.500 16.500H7M4 1v15" fill="none" stroke="#111" stroke-width="1.200" /></svg>
      </section>
    </main>

    <footer class="status">
      <span class="usage">Ausgelastet</span>
      <svg width="16" height="16" v-html="icons.autoPlan" />
      <span class="mode">Neue Vorgänge : Automatisch geplant</span>
      <div class="views">
        <button v-for="v in views" :key="v" :class="{ on: v === 'viewSheet' }" :aria-label="v"><svg width="15" height="16" v-html="icons[v]" /></button>
      </div>
      <svg class="sign" width="9" height="9"><path d="M0 4.500h9" stroke="#bbb" /></svg>
      <input v-model="zoomLevel" class="zoom" type="range" min="0" max="100" aria-label="Zoom" />
      <svg class="sign" width="9" height="9"><path d="M0 4.500h9M4.500 0v9" stroke="#bbb" /></svg>
    </footer>

    <footer class="taskbar">
      <button class="start" aria-label="Start"><svg width="17" height="17" v-html="icons.windows" /></button>
      <label class="search"><svg width="17" height="17" v-html="icons.lens" /><input type="text" placeholder="Zur Suche Text hier eingeben" aria-label="Suche" /></label>
      <button v-for="a in apps" :key="a.id" class="app-button" :class="{ running: a.running, active: a.active }" :aria-label="a.label">
        <svg width="24" height="24" v-html="icons[a.id]" />
        <span v-if="a.badge" class="badge">{{ a.badge }}</span>
      </button>
      <div class="tray">
        <svg class="weather" width="22" height="17" v-html="icons.cloud" />
        <span class="forecast">7°C&nbsp; Bewölkt</span>
        <svg class="up-icon" width="12" height="16" viewBox="2 0 12 16" v-html="icons.trayUp" />
        <svg width="16" height="16" v-html="icons.meet" />
        <svg width="17" height="16" v-html="icons.speaker" />
        <svg width="16" height="16" v-html="icons.wifi" />
        <svg width="23" height="16" v-html="icons.keyboard" />
        <span class="lang">DEU</span>
        <div class="clock"><span>21:04</span><span>22.11.2021</span></div>
        <svg class="notify" width="18" height="17" v-html="icons.notify" />
      </div>
    </footer>
  </div>
</template>

<style>
body {
  background: #fff;
}
</style>

<style scoped>
.app {
  display: flex;
  flex-direction: column;
  height: 100vh;
  overflow: hidden;
  font: 11px/16px 'Open Sans', 'Noto Sans', sans-serif;
  color: #222;
}
button {
  font: inherit;
  color: inherit;
  background: none;
  border: 0;
  padding: 0;
  margin: 0;
  box-sizing: border-box;
}
svg {
  flex: none;
  overflow: visible;
}
input,
select {
  font: inherit;
  color: inherit;
  box-sizing: border-box;
  border-radius: 0;
}

/* title bar */
.titlebar {
  position: relative;
  background: #31752f;
  color: #d5f5cf;
}
.ornament {
  position: absolute;
  right: 0;
  top: 0;
  width: 460px;
  height: 64px;
  overflow: hidden;
}
.title-row {
  position: relative;
  display: grid;
  grid-template-columns: 1fr auto 1fr;
  align-items: center;
  height: 34px;
}
.title-left {
  display: flex;
  height: 34px;
}
.quick {
  display: flex;
  align-items: center;
  width: 516px;
  box-sizing: border-box;
  padding-left: 22px;
}
.quick button,
.tell-me,
.doc-buttons button,
.title-right button {
  display: flex;
  align-items: center;
}
.q1 {
  margin-right: 14px;
}
.q2 {
  width: 39px;
  gap: 5px;
}
.q3 {
  width: 30px;
}
.faded {
  color: #5f9d5c;
}
.context-label,
.context-tab {
  display: flex;
  align-items: center;
  justify-content: center;
  width: 162px;
  background: #245e25;
}
.context-label {
  padding-bottom: 2px;
  box-sizing: border-box;
}
.title-right {
  display: flex;
  align-items: center;
  justify-content: flex-end;
  padding-bottom: 2px;
}
.avatar {
  width: 24px;
  height: 24px;
  margin: 0 12px 0 10px;
  border-radius: 50%;
  background: #cfd6cd;
  color: #555;
  font-size: 10px;
  line-height: 24px;
  text-align: center;
}
.title-right button,
.doc-buttons button {
  justify-content: center;
  width: 46px;
  height: 30px;
}
.tab-row {
  position: relative;
  display: flex;
  height: 30px;
  color: #fff;
}
.main-tabs {
  display: flex;
  width: 516px;
}
.file-tab {
  width: 61px;
  padding-right: 2px;
}
.tab {
  padding: 0 14px;
}
.tab.current {
  width: 69px;
  padding: 0;
  background: #f3f3f3;
  color: #31752f;
}
.tell-me {
  gap: 12px;
  margin-left: 14px;
}
.doc-buttons {
  display: flex;
  margin-left: auto;
}

/* ribbon */
.ribbon {
  display: flex;
  height: 92px;
  background: #f3f3f3;
  border-bottom: 1px solid #d2d2d2;
  box-sizing: border-box;
}
.group {
  display: flex;
  flex-direction: column;
  flex: none;
  margin: 4px 0;
  height: 84px;
  box-sizing: border-box;
  border-right: 1px solid #b5b5b5;
}
.g-view {
  width: 88px;
}
.g-clip {
  width: 196px;
}
.g-font {
  width: 171px;
}
.g-plan {
  width: 345px;
}
.g-tasks {
  width: 298px;
}
.g-insert {
  width: 278px;
}
.g-props {
  width: 260px;
}
.g-edit {
  width: 190px;
}
.tools {
  display: flex;
  flex: 1;
}
.caption {
  position: relative;
  height: 16px;
  line-height: 16px;
  margin-bottom: -4px;
  text-align: center;
}
.launcher {
  position: absolute;
  right: 2px;
  top: 3px;
}
.big {
  display: flex;
  flex-direction: column;
  align-items: center;
  gap: 4px;
  height: 72px;
  padding-top: 3px;
  white-space: nowrap;
}
.off {
  color: #b0b0b0;
}
.w-view {
  width: 87px;
}
.w-clip {
  width: 63px;
  padding-left: 5px;
}
.w-manual {
  width: 52px;
  margin-left: 5px;
}
.w-auto {
  width: 72px;
}
.w-inspect {
  width: 48px;
}
.w-move {
  width: 64px;
}
.w-mode {
  width: 48px;
}
.w-task {
  width: 52px;
  margin-left: 6px;
}
.w-summary {
  width: 90px;
}
.w-mile {
  width: 66px;
}
.w-deliver {
  width: 56px;
}
.w-info {
  width: 84px;
  margin-left: 6px;
  margin-right: 3px;
}
.w-scroll {
  width: 86px;
  margin-left: 3px;
}
.stack {
  display: flex;
  flex-direction: column;
  margin-top: -1px;
}
.small {
  display: flex;
  align-items: center;
  gap: 3px;
  height: 23px;
  white-space: nowrap;
}
.chev {
  margin-left: 7px;
}
.rule {
  width: 1px;
  height: 22px;
  background: #d4d4d4;
}
.rule.tall {
  height: 56px;
  margin: 6px 0 0 4px;
}
.font-tools {
  flex-direction: column;
  padding: 7px 0 0 8px;
}
.font-row {
  display: flex;
  align-items: center;
  gap: 2px;
}
.combo {
  position: relative;
}
.combo select {
  appearance: none;
  width: 100%;
  height: 23px;
  padding: 0 3px;
  border: 1px solid #ababab;
  background: #fff;
}
.combo::after {
  content: '';
  position: absolute;
  right: 5px;
  top: 10px;
  border: 3px solid transparent;
  border-top: 4px solid #666;
}
.font-name {
  width: 95px;
}
.font-size {
  width: 58px;
}
.styles {
  height: 36px;
  gap: 0;
}
.glyph {
  width: 23px;
  color: #555;
  font-size: 12px;
}
.styles .rule {
  margin: 0 7px 0 6px;
}
.colour {
  display: flex;
  align-items: center;
  gap: 4px;
  width: 39px;
}
.plan-left {
  width: 143px;
  box-sizing: border-box;
  padding: 8px 0 0 7px;
}
.percents {
  display: flex;
}
.percent {
  display: flex;
  flex-direction: column;
  align-items: center;
  width: 24px;
  color: #999;
  font-size: 9px;
  line-height: 14px;
}
.links {
  display: flex;
  align-items: center;
  height: 22px;
  margin-top: 8px;
  padding-left: 4px;
  gap: 7px;
}
.links button {
  height: 17px;
}
.collapse {
  margin: auto 8px 1px auto;
}

/* workspace */
.workspace {
  position: relative;
  display: flex;
  flex: 1;
  min-height: 0;
  background: #fff;
}
.view-name {
  display: flex;
  align-items: center;
  justify-content: center;
  width: 26px;
  background: #e1e1e1;
  color: #3c6e3c;
  font-size: 13px;
}
.view-name span {
  writing-mode: vertical-rl;
  transform: rotate(180deg);
  white-space: nowrap;
}
.sheet {
  flex: 1;
  min-width: 0;
  margin-bottom: 17px;
  overflow: hidden;
}
.grid {
  table-layout: fixed;
  width: 1235px;
  border-collapse: separate;
  border-spacing: 0;
  font-size: 13px;
  line-height: 18px;
  color: #111;
}
.grid th,
.grid td {
  box-sizing: border-box;
  height: 21px;
  padding: 0 2px;
  border-right: 1px solid #d0d0d0;
  border-bottom: 1px solid #d0d0d0;
  white-space: nowrap;
  overflow: hidden;
  text-align: left;
  font-weight: 400;
}
.grid thead th {
  height: 22px;
  padding: 4px 5px 0;
  background: #d3d3d3;
  border-right-color: #bdbdbd;
  border-bottom: 2px solid #4b7a49;
  color: #3b7a3b;
  font-size: 11px;
  font-weight: 700;
  line-height: 16px;
}
.grid thead th.raised {
  padding-top: 0;
}
.grid thead .corner {
  background: #e8e8e8;
  border-bottom: 1px solid #d0d0d0;
  border-right-color: #a8a8a8;
}
.grid thead .info {
  padding: 0;
  text-align: center;
}
.info svg {
  display: block;
  margin: 0 auto;
}
.head {
  display: flex;
  align-items: center;
  gap: 1px;
}
.head-text {
  flex: 1;
  min-width: 0;
  overflow: hidden;
}
.drop {
  border: 4px solid transparent;
  border-top: 5px solid #4a6b4a;
  border-bottom: 0;
}
.grid .number {
  background: #e4e4e4;
  border-right-color: #a8a8a8;
  padding: 0 0 2px;
  text-align: center;
  color: #777;
  font-size: 12px;
}
.grid .right {
  padding-right: 2px;
  text-align: right;
}
.grid .col-name {
  padding-left: 16px;
}
.grid td:last-child {
  border-right-color: #a0a0a0;
}
.selected td {
  background: #c8c8c8;
  border-right-color: #b4b4b4;
  border-bottom: 2px solid #3f6b3f;
  box-shadow: inset 0 2px #3f6b3f;
}
.selected td:nth-child(2) {
  border-left: 2px solid #3f6b3f;
}
.selected td:last-child {
  border-right: 2px solid #3f6b3f;
}
.selected .number {
  background: #d0d0d0;
  color: #3b7a3b;
  font-weight: 700;
}
.scroll {
  display: flex;
  flex-direction: column;
  width: 15px;
  margin: 2px 1px 18px 0;
  background: #f3f3f3;
}
.scroll button {
  display: flex;
  align-items: center;
  justify-content: center;
  height: 15px;
  border: 1px solid #ababab;
  background: #fff;
}
.thumb {
  flex: 1;
  border: 1px solid #ababab;
  background: #fff;
}
.gap {
  height: 22px;
}
.up,
.down {
  border: 4px solid transparent;
}
.up {
  border-top: 0;
  border-bottom: 4px solid #777;
}
.down {
  border-bottom: 0;
  border-top: 4px solid #777;
}
.grip {
  height: 5px;
  margin-top: 2px;
  box-sizing: border-box;
  background: #eee;
  border-bottom: 2px solid #666;
}

/* dialog */
.dialog {
  position: absolute;
  left: 643px;
  top: 158px;
  width: 650px;
  box-sizing: border-box;
  border: 1px solid #6a6a6a;
  border-bottom-width: 2px;
  border-right-width: 2px;
  background: #f0f0f0;
  box-shadow: 0 4px 16px rgba(0, 0, 0, 0.35);
  color: #111;
}
.dlg-head {
  display: flex;
  align-items: center;
  justify-content: space-between;
  height: 30px;
  padding: 0 6px 0 8px;
  background: #fff;
}
.dlg-head button {
  display: flex;
}
.dlg-tabs {
  display: flex;
  align-items: flex-end;
  height: 21px;
  padding-left: 4px;
}
.dlg-tabs button {
  height: 19px;
  border-right: 2px solid #777;
  border-top: 1px solid #fafafa;
  white-space: nowrap;
}
.dlg-tabs .active {
  height: 21px;
  padding-bottom: 3px;
}
.dlg-tabs .t1 {
  width: 62px;
  border-right: 1px solid #fafafa;
}
.t2 {
  width: 49px;
}
.t3 {
  width: 50px;
}
.dlg-tabs .t4 {
  width: 119px;
  padding-left: 3px;
}
.dlg-body {
  border-top: 1px solid #fbfbfb;
  border-right: 1px solid #8a8a8a;
  padding: 11px 5px 6px 12px;
}
.name-row {
  display: flex;
  align-items: flex-start;
}
.name-row label {
  width: 97px;
}
.name-row input {
  width: 314px;
  height: 22px;
  padding: 0 5px;
  border: 1px solid #a8a8a8;
  background: #fff;
}
.legend {
  display: flex;
  align-items: center;
  gap: 6px;
  margin-top: 1px;
  padding-left: 2px;
}
.legend i {
  flex: 1;
  height: 1px;
  background: #dadada;
}
.hint {
  margin: 15px 0 8px 17px;
  line-height: 13px;
}
.rate-tabs {
  display: flex;
  align-items: flex-end;
  margin-left: 18px;
}
.rate-tabs button {
  width: 47px;
  height: 19px;
  padding: 2px 5px 0;
  border: 1px solid #dcdcdc;
  border-bottom: 0;
  border-left: 0;
  text-align: left;
}
.rate-tabs .active {
  width: 77px;
  height: 21px;
  margin-bottom: -1px;
  padding: 0 0 2px 7px;
  background: #fff;
  border-color: #fff;
  z-index: 1;
}
.rate-panel {
  width: 442px;
  box-sizing: border-box;
  margin-left: 18px;
  padding: 9px 8px 9px 7px;
  border: 1px solid #dcdcdc;
  background: #fff;
}
.rate-view {
  display: flex;
  height: 123px;
  overflow: hidden;
}
.rates {
  flex: none;
  align-self: flex-start;
  table-layout: fixed;
  width: 408px;
  border-collapse: separate;
  border-spacing: 0;
}
.rates th,
.rates td {
  box-sizing: border-box;
  height: 18px;
  padding: 0 2px;
  border-right: 1px dotted #222;
  border-bottom: 1px dotted #222;
  line-height: 16px;
  text-align: left;
  font-weight: 400;
  white-space: nowrap;
  overflow: hidden;
}
.rates thead th {
  height: 19px;
  padding: 3px 0 0 5px;
  line-height: 14px;
  background: #f0f0f0;
  border-top: 1px solid #888;
  border-right: 1px solid #222;
  border-bottom: 1px solid #999;
}
.rates thead th:first-child,
.rates tbody th {
  border-left: 1px solid #888;
  border-bottom: 1px solid #222;
}
.rates tbody th {
  background: #f0f0f0;
  border-right: 1px solid #999;
}
.rates thead .hot {
  padding-top: 2px;
  border-bottom: 2px solid #4a6b45;
}
.rates tbody .hot {
  border-right: 2px solid #4a6b45;
}
.rates td:last-child {
  border-right: 1px solid #999;
}
.rates .focus {
  outline: 2px solid #4a6b45;
  outline-offset: -1px;
}
.rate-scroll {
  display: flex;
  flex-direction: column;
  align-items: center;
  width: 17px;
  padding-top: 5px;
  border-top: 1px solid #999;
  background: #f0f0f0;
}
.rate-scroll i {
  width: 15px;
  height: 18px;
  margin-top: 5px;
  background: #cdcdcd;
}
.rate-scroll .bottom {
  margin: auto 0 4px;
}
.accrual-row {
  display: flex;
  margin: 8px 0 0 17px;
}
.accrual-row label {
  width: 92px;
}
.pick {
  position: relative;
}
.pick select {
  appearance: none;
  width: 104px;
  height: 21px;
  padding: 0 5px;
  border: 1px solid #8a8a8a;
  background: #fff;
}
.pick svg {
  position: absolute;
  right: 4px;
  top: 7px;
}
.dlg-foot {
  display: flex;
  gap: 11px;
  margin-top: 38px;
  padding-top: 18px;
  border-top: 1px solid #dcdcdc;
}
.dlg-foot button {
  width: 73px;
  height: 21px;
  border: 1px solid #adadad;
  background: #e1e1e1;
}
.dlg-foot .wide {
  width: 88px;
}
.dlg-foot .primary {
  border: 2px solid #2f78b4;
}
.push {
  flex: 1;
}
.beam {
  position: absolute;
  left: 195px;
  top: 257px;
}

/* status bar */
.status {
  display: flex;
  align-items: center;
  height: 22px;
  box-sizing: border-box;
  border-top: 1px solid #c6c6c6;
  background: #f2f2f2;
}
.usage {
  width: 92px;
  padding-left: 8px;
}
.mode {
  margin-left: 3px;
}
.views {
  display: flex;
  align-self: stretch;
  margin-left: auto;
}
.views button {
  display: flex;
  align-items: center;
  justify-content: center;
  width: 40px;
}
.views .on {
  background: #cacaca;
}
.sign {
  margin: 0 4px;
}
.zoom {
  appearance: none;
  width: 100px;
  height: 7px;
  margin: 0;
  background: linear-gradient(#444, #444) center / 100% 1px no-repeat;
}
.zoom::-webkit-slider-thumb {
  appearance: none;
  width: 2px;
  height: 7px;
  background: #333;
}

/* task bar */
.taskbar {
  display: flex;
  height: 40px;
  background: linear-gradient(90deg, #22363d, #1f303d 50%, #172440);
  color: #fff;
}
.start {
  display: flex;
  align-items: center;
  justify-content: center;
  width: 48px;
}
.search {
  display: flex;
  align-items: center;
  gap: 10px;
  width: 344px;
  box-sizing: border-box;
  padding-left: 12px;
  border: 1px solid #cfcfcf;
  border-left: 0;
  background: #f2f2f2;
}
.search input {
  flex: 1;
  min-width: 0;
  padding: 2px 0 0;
  border: 0;
  background: none;
  font-size: 14px;
}
.search input::placeholder {
  color: #333;
  opacity: 1;
}
.app-button {
  position: relative;
  display: flex;
  align-items: center;
  justify-content: center;
  width: 49px;
}
.app-button.running {
  box-shadow: inset 0 -2px #86add0;
}
.app-button.running:not(.active) {
  width: 41px;
  margin: 0 4px;
}
.app-button.active {
  background: #4a5a64;
}
.badge {
  position: absolute;
  right: 0;
  top: 18px;
  width: 19px;
  height: 17px;
  border: 1px solid #ddd;
  border-radius: 9px;
  background: #2c3c44;
  font-size: 11px;
  line-height: 16px;
}
.tray {
  display: flex;
  align-items: center;
  gap: 8px;
  margin-left: auto;
  margin-right: 3px;
  padding-right: 19px;
  border-right: 1px solid #5c6678;
}
.forecast {
  font-size: 13px;
}
.up-icon {
  margin-left: 13px;
}
.lang {
  margin-left: 4px;
}
.clock {
  display: flex;
  flex-direction: column;
  align-items: center;
  line-height: 18px;
  width: 62px;
}
.notify {
  margin-left: 7px;
}
</style>
